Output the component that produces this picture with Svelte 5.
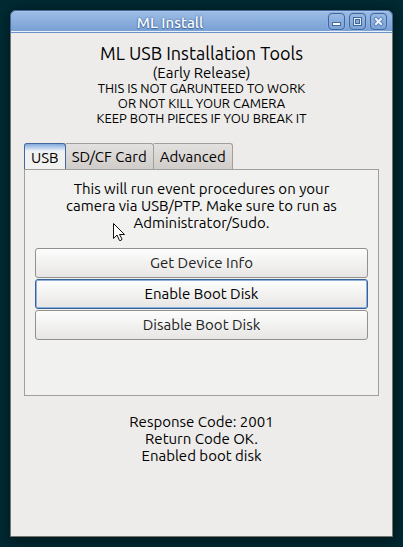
<script>
  const tabs = ['USB', 'SD/CF Card', 'Advanced'];
  const actions = ['Get Device Info', 'Enable Boot Disk', 'Disable Boot Disk'];
  let activeTab = $state('USB');
  let focused = $state('Enable Boot Disk');
</script>

<div class="desktop">
  <main class="window">
    <div class="titlebar">
      <span class="title">ML Install</span>
      <div class="controls">
        <button aria-label="Minimize">
          <svg width="17" height="17" viewBox="0 0 17 17"><rect x="4.5" y="9.5" width="8" height="3" fill="#fff" stroke="#41689d" /></svg>
        </button>
        <button aria-label="Maximize">
          <svg width="17" height="17" viewBox="0 0 17 17"><rect x="4.5" y="4.5" width="8" height="8" fill="#e4edf8" stroke="#41689d" /><rect x="6.5" y="6.5" width="4" height="4" fill="#86abd9" stroke="#41689d" /></svg>
        </button>
        <button aria-label="Close">
          <svg width="17" height="17" viewBox="0 0 17 17" stroke-linecap="square"><path d="M6 6l5 5M11 6l-5 5" stroke="#5c83b8" stroke-width="4" /><path d="M6 6l5 5M11 6l-5 5" stroke="#eef4fc" stroke-width="2" /></svg>
        </button>
      </div>
    </div>

    <div class="body">
      <header>
        <h1>ML USB Installation Tools</h1>
        <p class="release">(Early Release)</p>
        <p class="warning">THIS IS NOT GARUNTEED TO WORK<br />OR NOT KILL YOUR CAMERA<br />KEEP BOTH PIECES IF YOU BREAK IT</p>
      </header>

      <div class="tabs" role="tablist">
        {#each tabs as tab}
          <button role="tab" class:active={tab === activeTab} aria-selected={tab === activeTab} onclick={() => (activeTab = tab)}>{tab}</button>
        {/each}
      </div>

      <section class="panel" role="tabpanel" aria-label={activeTab}>
        <p>This will run event procedures on your<br />camera via USB/PTP. Make sure to run as<br />Administrator/Sudo.</p>
        <div class="actions">
          {#each actions as action}
            <button class:focused={action === focused} onclick={() => (focused = action)}>{action}</button>
          {/each}
        </div>
        <svg class="pointer" width="14" height="20" viewBox="0 0 14 20" aria-hidden="true">
          <path d="M1.500 1.500V16.500L5 13L7.500 18.500Q9.500 19 10 17L7.500 12.500H12.500Z" fill="#fff" stroke="#111" stroke-linejoin="round" />
        </svg>
      </section>

      <p class="status" role="status">Response Code: 2001<br />Return Code OK.<br />Enabled boot disk</p>
    </div>
  </main>
</div>

<style>
  :global(body) {
    margin: 0;
  }
  .desktop {
    box-sizing: border-box;
    min-height: 100vh;
    padding: 10px;
    display: flex;
    background: #002a33;
    color: #000;
    font-family: Ubuntu, "Noto Sans", sans-serif;
    font-size: 15px;
    line-height: 17px;
  }
  h1,
  p {
    margin: 0;
    font-weight: 400;
  }
  button {
    font: inherit;
    color: inherit;
    padding: 0;
    margin: 0;
  }
  .window {
    flex: 1;
    min-width: 0;
    display: flex;
    flex-direction: column;
    box-sizing: border-box;
    border: 1px solid #77756f;
    border-radius: 6px 6px 0 0;
    background: #edecea;
    box-shadow: 1px 2px 12px 2px rgba(0, 0, 0, 0.45);
  }
  .titlebar {
    display: flex;
    align-items: center;
    box-sizing: border-box;
    height: 23px;
    margin: -1px -1px 0;
    padding: 0 5px 0 1px;
    border: 1px solid #46679a;
    border-bottom-color: #6c93c9;
    border-radius: 6px 6px 0 0;
    background: linear-gradient(#9dbde6, #779fd3);
    box-shadow: inset 0 1px #a9c5ea, inset 0 -1px #e8f0fa;
  }
  .title {
    flex: 1;
    padding-top: 2px;
    text-align: center;
    color: #fff;
    font-weight: 500;
    text-shadow: 0 0 2px #31588f, 0 1px 1px #41689d;
  }
  .controls {
    display: flex;
    gap: 4px;
  }
  .controls button {
    box-sizing: border-box;
    width: 17px;
    height: 17px;
    display: flex;
    align-items: center;
    justify-content: center;
    border: 1px solid #41689d;
    border-radius: 4px;
    background: linear-gradient(#98b9e4, #7ba3d6);
    box-shadow: 0 0 0 1px #8fb1df;
  }
  .controls svg {
    flex: none;
  }
  .body {
    padding: 10px 13px 16px;
    text-align: center;
  }
  h1 {
    font-size: 18px;
    line-height: 21px;
  }
  .release {
    line-height: 17px;
  }
  .warning {
    font-size: 13px;
    line-height: 15px;
  }
  .tabs {
    display: flex;
    margin-top: 17px;
  }
  .tabs button {
    box-sizing: border-box;
    height: 26px;
    padding: 0 6px;
    border: 1px solid #a09f9b;
    border-left-width: 0;
    border-bottom: 0;
    border-radius: 0 3px 0 0;
    background: linear-gradient(#e3e1df, #cfccc9);
  }
  .tabs button.active {
    position: relative;
    height: 27px;
    margin-bottom: -1px;
    border: 1px solid #41689d;
    border-bottom: 0;
    border-radius: 3px 3px 0 0;
    background: linear-gradient(#83a9dc, #eef2f7 7px, #f1f1ef 10px);
  }
  .panel {
    position: relative;
    box-sizing: border-box;
    min-height: 227px;
    padding: 10px;
    border: 1px solid #a09f9b;
    background: #f1f1ef;
  }
  .actions {
    display: flex;
    flex-direction: column;
    gap: 1px;
    margin-top: 17px;
  }
  .actions button {
    height: 30px;
    padding-bottom: 2px;
    border: 1px solid #93918d;
    border-radius: 3px;
    background: linear-gradient(#fdfdfd, #e7e6e4);
    color: #222;
  }
  .actions button.focused {
    border-color: #346198;
    box-shadow: inset 0 0 0 1px #8fb1dc;
    color: #000;
  }
  .pointer {
    position: absolute;
    left: 87px;
    top: 52px;
  }
  .status {
    margin-top: 17px;
  }
</style>
